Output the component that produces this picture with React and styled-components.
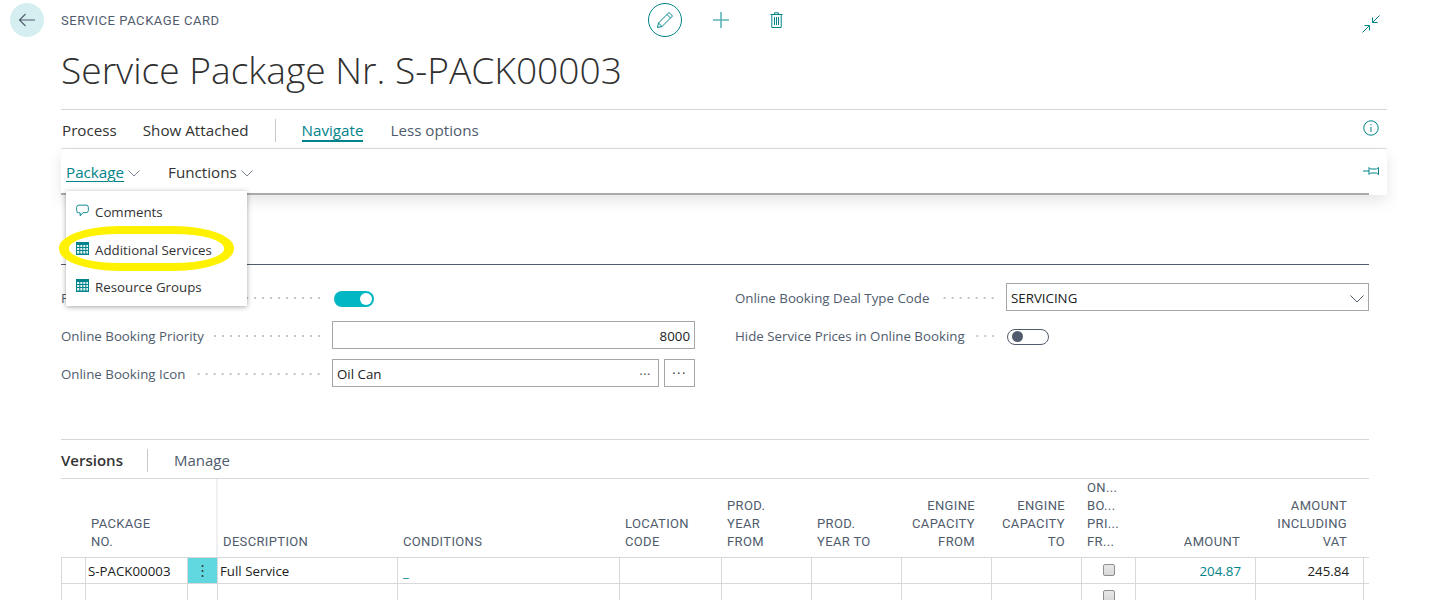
import React from 'react';
import styled, { createGlobalStyle } from 'styled-components';

const TEAL = '#00838a';
const Global = createGlobalStyle`
  html, body { margin: 0; padding: 0; height: 600px; overflow: hidden; background: #fff; }
  body { font-family: "Open Sans", "Liberation Sans", sans-serif; color: #212121; }
  * { box-sizing: border-box; }
`;

const Page = styled.div`position: relative; width: 1431px; height: 600px; overflow: hidden;`;
const TopBar = styled.header`display: grid; grid-template-columns: 61px 587px 170px 1fr 69px; height: 40px; align-items: center;`;
const BackCell = styled.div`padding-left: 10px; display: flex;`;
const BackButton = styled.button`width: 34px; height: 34px; border: 0; padding: 0; border-radius: 50%; background: #d5eef0; display: flex; align-items: center; justify-content: center;`;
const Crumb = styled.div`font: 400 13px Roboto, sans-serif; letter-spacing: .55px; padding-top: 1px; color: #505c6d; text-transform: uppercase;`;
const TopActions = styled.div`display: flex; align-items: center;`;
const EditCircle = styled.div`width: 34px; height: 34px; border-radius: 50%; border: 1px solid ${TEAL}; display: flex; align-items: center; justify-content: center;`;
const TopIcon = styled.div`display: flex; margin-left: ${p => p.$ml}px;`;
const CollapseCell = styled.div`display: flex; padding-top: 8px;`;
const Body = styled.div`padding-left: 61px;`;
const Title = styled.h1`margin: 0; height: 69px; line-height: 60px; font-weight: 300; font-size: 37.15px; color: #303030; white-space: nowrap;`;
const Tabs = styled.nav`width: 1326px; height: 40px; padding-top: 2px; border-top: 1px solid #d6d6d6; border-bottom: 1px solid #dcdcdc; display: flex; align-items: center; font-size: 15.2px;`;
const Tab = styled.span`margin-left: ${p => p.$ml}px; color: ${p => p.$active ? TEAL : p.$muted ? '#505c6d' : '#333'}; ${p => p.$active && `border-bottom: 2px solid ${TEAL}; line-height: 20px; margin-top: 2px;`}`;
const TabDivider = styled.span`width: 1px; height: 23px; background: #c8c8c8; margin-left: 26px;`;
const InfoIcon = styled.span`margin-left: auto; margin-right: 8px; display: flex; margin-top: -4px;`;
const ActionBar = styled.div`width: 1326px; height: 46px; background: #fff; box-shadow: 0 6px 14px rgba(0,0,0,.1); display: flex; flex-direction: column;`;
const ActionRow = styled.div`flex: 1; display: flex; align-items: center; font-size: 15.2px; padding-left: 5px; padding-top: 2px;`;
const ActionMenu = styled.span`display: flex; align-items: center; gap: 4px; margin-right: ${p => p.$mr || 0}px; color: ${p => p.$active ? TEAL : '#333'}; text-decoration: ${p => p.$active ? 'underline' : 'none'}; text-underline-offset: 3px;`;
const ChevronWrap = styled.span`display: inline-flex; padding-top: 2px;`;
const PinIcon = styled.span`margin-left: auto; margin-right: 7px; display: flex; margin-top: -3px;`;
const BarRule = styled.div`width: 1308px; height: 2px; background: #a8abae;`;
const SectionRule = styled.div`width: 1308px; height: 1px; background: #505c6d; margin-top: 69px;`;
const Form = styled.section`width: 1308px; display: grid; grid-template-columns: 634px 634px; column-gap: 40px; padding-top: 13px;`;
const FormCol = styled.div`display: flex; flex-direction: column;`;
const FormRow = styled.div`height: 38px; display: grid; grid-template-columns: 271px 1fr; align-items: center;`;
const Label = styled.div`display: flex; align-items: center; font-size: 13.3px; padding: 2px 12px 0 0; color: #505c6d; white-space: nowrap;`;
const Leader = styled.span`flex: 1; height: 4px; margin-left: 9px; background: radial-gradient(circle at 7px 2px, #c0c4ca 0.9px, transparent 1.1px) right center / 8px 4px repeat-x;`;
const Input = styled.div`height: 28px; border: 1px solid #a6a6a6; display: flex; align-items: center; padding: 2px 4px 0; font-size: 13.3px; color: #212121; flex: 1; justify-content: ${p => p.$right ? 'flex-end' : 'space-between'};`;
const FieldGroup = styled.div`display: flex; gap: 5px;`;
const Ellipsis = styled.span`color: #505c6d; font-size: 13px; line-height: 20px; padding-right: 3px; letter-spacing: .5px;`;
const LookupButton = styled.div`width: 31px; height: 28px; border: 1px solid #a6a6a6; display: flex; align-items: center; justify-content: center; font-size: 13px; letter-spacing: 1.500px; color: #333;`;
const Toggle = styled.div`height: 16px; border-radius: 8px; display: flex; align-items: center; margin-top: ${p => p.$on ? 4 : 3}px; ${p => p.$on ? 'width:40px; margin-left:2px; padding:0 2px; background:#00b7c3; justify-content:flex-end;' : 'width:42px; margin-left:1px; padding:0 4px; border:1px solid #505c6d; justify-content:flex-start;'}`;
const Knob = styled.span`width: ${p => p.$on ? 12 : 11}px; height: ${p => p.$on ? 12 : 11}px; border-radius: 50%; background: ${p => p.$on ? '#fff' : '#505c6d'};`;
const SubTabs = styled.div`width: 1308px; height: 40px; margin-top: 47px; padding-top: 2px; border-top: 1px solid #d6d6d6; border-bottom: 1px solid #d6dae0; display: flex; align-items: center; font-size: 15px;`;
const SubTab = styled.span`font-weight: ${p => p.$bold ? 600 : 400}; color: ${p => p.$bold ? '#333' : '#505c6d'};`;
const SubDivider = styled.span`width: 1px; height: 23px; background: #c8c8c8; margin: 0 26px 0 24px;`;
const Grid = styled.div`width: 1308px; display: grid; grid-template-columns: 25px 102px 30px 180px 222px 102px 90px 90px 90px 90px 54px 120px 108px 5px; grid-template-rows: 79px 26px 26px;`;
const Head = styled.div`display: flex; align-items: flex-end; justify-content: ${p => p.$right ? 'flex-end' : 'flex-start'}; text-align: ${p => p.$right ? 'right' : 'left'}; border-bottom: 1px solid #d8d8d8; padding: 0 ${p => p.$right ? p.$pr || 17 : 0}px 6px 5px; font: 400 13px/18px Roboto, sans-serif; letter-spacing: .35px; color: #505c6d; text-transform: uppercase; ${p => p.$stripe && 'box-shadow: inset -2px 0 0 #eef0f2;'}`;
const Cell = styled.div`display: flex; align-items: center; justify-content: ${p => p.$center ? 'center' : p.$right ? 'flex-end' : 'flex-start'}; border-right: 1px solid #d8d8d8; border-bottom: 1px solid #d8d8d8; ${p => p.$first && 'border-left: 1px solid #d8d8d8;'} padding: 0 ${p => p.$right ? 14 : 2}px 0 2px; font-size: 13.3px; color: ${p => p.$link ? TEAL : '#212121'}; white-space: nowrap; ${p => p.$dots && 'background:#61d7df;'} ${p => p.$plain && 'border-right:0;'}`;
const Blank = styled.span`margin: 4px 0 0 3px; line-height: 1;`;
const Box = styled.input.attrs({ type: 'checkbox', readOnly: true })`appearance: none; margin: 0 0 2px; width: 12px; height: 12px; border: 1px solid #8f8f8f; border-radius: 2px; background: linear-gradient(#e8e8e8,#d8d8d8);`;
const Popup = styled.div`position: absolute; left: 66px; top: 191px; width: 181px; height: 115px; background: #fff; box-shadow: 0 1px 5px rgba(0,0,0,.35); display: flex; flex-direction: column; padding-top: 2.300px;`;
const PopupItem = styled.div`height: 38px; display: flex; align-items: center; gap: 6px; padding-left: 10px; font-size: 13.3px; color: #333;`;
const IconNudge = styled.span`display: flex; margin-top: -3px;`;
const Highlight = styled.div`position: absolute; left: 59px; top: 226px; width: 175px; height: 45px; border: solid #fff200; border-width: 8px 10px; border-radius: 60px / 22px; pointer-events: none;`;

const S = { fill: 'none', stroke: TEAL, strokeWidth: 1 };
const Back = () => <svg width="18" height="14" viewBox="0 0 18 14" fill="none" stroke="#505c6d" strokeWidth="1.1"><path d="M17 7H1.500M7.500 1 1.500 7l6 6" /></svg>;
const Pencil = () => <svg width="18" height="18" viewBox="0 0 18 18" {...S}><path d="M13 1.500 16.500 5 6 15.500 1.500 16.500 2.500 12z" /><path d="M11 3.500 14.500 7M2.500 12 6 15.500" /></svg>;
const Plus = () => <svg width="16" height="16" viewBox="0 0 16 16" fill="none" stroke="#5cb4b8" strokeWidth="1.600"><path d="M8 0v16M0 8h16" /></svg>;
const Trash = () => <svg width="13" height="16" viewBox="0 0 13 16" {...S}><path d="M.5 2.500h12M4.500 2.500V.8h4v1.700M1.800 2.500v13h9.400v-13M4.500 5v8M6.500 5v8M8.500 5v8" /></svg>;
const Collapse = () => <svg width="18" height="18" viewBox="0 0 18 18" {...S}><path d="M17.500.5 10.500 7.500M10.500 2.500v5h5M.5 17.500l7-7M2.500 10.500h5v5" /></svg>;
const Info = () => <svg width="16" height="16" viewBox="0 0 16 16" {...S}><circle cx="8" cy="8" r="7.200" /><path d="M8 7v5M8 4v1.300" /></svg>;
const Pin = () => <svg width="17" height="10" viewBox="0 0 17 10" {...S}><path d="M0 5h6M6 1.500v7l1.500-1.500h6l2 1.500v-7l-2 1.500h-6z" /></svg>;
const Chevron = () => <svg width="12" height="7" viewBox="0 0 12 7" fill="none" stroke="#7a8391" strokeWidth="1"><path d="M.5.5 6 6l5.500-5.500" /></svg>;
const Comment = () => <svg width="13" height="14" viewBox="0 0 14 14" {...S}><path d="M3 .7h8a2.300 2.300 0 0 1 2.300 2.300v3.500a2.300 2.300 0 0 1-2.300 2.300H7.500l-3 3.500V9H3A2.300 2.300 0 0 1 .7 6.500V3A2.300 2.300 0 0 1 3 .7z" /></svg>;
const Table = () => <svg width="13" height="13" viewBox="0 0 13 13"><rect width="13" height="13" fill={TEAL} /><path d="M1 3h2.300v2H1zM4.300 3h2v2h-2zM7.300 3h2v2h-2zM10.300 3H12v2h-1.700zM1 6h2.300v2H1zM4.300 6h2v2h-2zM7.300 6h2v2h-2zM10.300 6H12v2h-1.700zM1 9h2.300v2.500H1zM4.300 9h2v2.500h-2zM7.300 9h2v2.500h-2zM10.300 9H12v2.500h-1.700z" fill="#e6f3f3" /></svg>;
const Dots = () => <svg width="3" height="14" viewBox="0 0 3 14" fill="#333"><circle cx="1.500" cy="2" r="1" /><circle cx="1.500" cy="7" r="1" /><circle cx="1.500" cy="12" r="1" /></svg>;

const heads = [
  { t: '' }, { t: <>Package<br />No.</> }, { t: '', stripe: true },
  { t: 'Description' }, { t: 'Conditions' }, { t: <>Location<br />Code</> },
  { t: <>Prod.<br />Year<br />From</> }, { t: <>Prod.<br />Year To</> },
  { t: <>Engine<br />Capacity<br />From</>, right: true }, { t: <>Engine<br />Capacity<br />To</>, right: true },
  { t: <>On...<br />Bo...<br />Pri...<br />Fr...</> }, { t: 'Amount', right: true, pr: 16 },
  { t: <>Amount<br />Including<br />VAT</>, right: true }, { t: '' },
];

export default function App() {
  return (
    <Page>
      <Global />
      <TopBar>
        <BackCell><BackButton aria-label="Back"><Back /></BackButton></BackCell>
        <Crumb>Service Package Card</Crumb>
        <TopActions>
          <EditCircle><Pencil /></EditCircle>
          <TopIcon $ml={31}><Plus /></TopIcon>
          <TopIcon $ml={41}><Trash /></TopIcon>
        </TopActions>
        <span />
        <CollapseCell><Collapse /></CollapseCell>
      </TopBar>
      <Body>
        <Title>Service Package Nr. S-PACK00003</Title>
        <Tabs>
          <Tab $ml={1}>Process</Tab>
          <Tab $ml={26}>Show Attached</Tab>
          <TabDivider />
          <Tab $ml={26} $active>Navigate</Tab>
          <Tab $ml={27} $muted>Less options</Tab>
          <InfoIcon><Info /></InfoIcon>
        </Tabs>
        <ActionBar>
          <ActionRow>
            <ActionMenu $active $mr={28}>Package<ChevronWrap><Chevron /></ChevronWrap></ActionMenu>
            <ActionMenu>Functions<ChevronWrap><Chevron /></ChevronWrap></ActionMenu>
            <PinIcon><Pin /></PinIcon>
          </ActionRow>
          <BarRule />
        </ActionBar>
        <SectionRule />
        <Form>
          <FormCol>
            <FormRow><Label>F<Leader /></Label><Toggle $on><Knob $on /></Toggle></FormRow>
            <FormRow><Label>Online Booking Priority<Leader /></Label><Input $right>8000</Input></FormRow>
            <FormRow><Label>Online Booking Icon<Leader /></Label>
              <FieldGroup><Input>Oil Can<Ellipsis>···</Ellipsis></Input><LookupButton>···</LookupButton></FieldGroup>
            </FormRow>
          </FormCol>
          <FormCol>
            <FormRow><Label>Online Booking Deal Type Code<Leader /></Label>
              <Input>SERVICING<ChevronWrap><svg width="14" height="8" viewBox="0 0 14 8" fill="none" stroke="#505c6d"><path d="M.5.5 7 7l6.500-6.500" /></svg></ChevronWrap></Input>
            </FormRow>
            <FormRow><Label>Hide Service Prices in Online Booking<Leader /></Label><Toggle><Knob /></Toggle></FormRow>
          </FormCol>
        </Form>
        <SubTabs>
          <SubTab $bold>Versions</SubTab>
          <SubDivider />
          <SubTab>Manage</SubTab>
        </SubTabs>
        <Grid>
          {heads.map((h, i) => <Head key={i} $right={h.right} $pr={h.pr} $stripe={h.stripe}>{h.t}</Head>)}
          <Cell $first />
          <Cell>S-PACK00003</Cell>
          <Cell $center $dots><Dots /></Cell>
          <Cell>Full Service</Cell>
          <Cell $link><Blank>_</Blank></Cell>
          <Cell /><Cell /><Cell /><Cell /><Cell />
          <Cell $center><Box /></Cell>
          <Cell $right $link>204.87</Cell>
          <Cell $right>245.84</Cell>
          <Cell $plain />
          <Cell $first /><Cell /><Cell /><Cell /><Cell /><Cell /><Cell /><Cell /><Cell /><Cell />
          <Cell $center><Box /></Cell>
          <Cell /><Cell /><Cell $plain />
        </Grid>
      </Body>
      <Popup>
        <PopupItem><IconNudge><Comment /></IconNudge>Comments</PopupItem>
        <PopupItem><IconNudge><Table /></IconNudge>Additional Services</PopupItem>
        <PopupItem><IconNudge><Table /></IconNudge>Resource Groups</PopupItem>
      </Popup>
      <Highlight />
    </Page>
  );
}
